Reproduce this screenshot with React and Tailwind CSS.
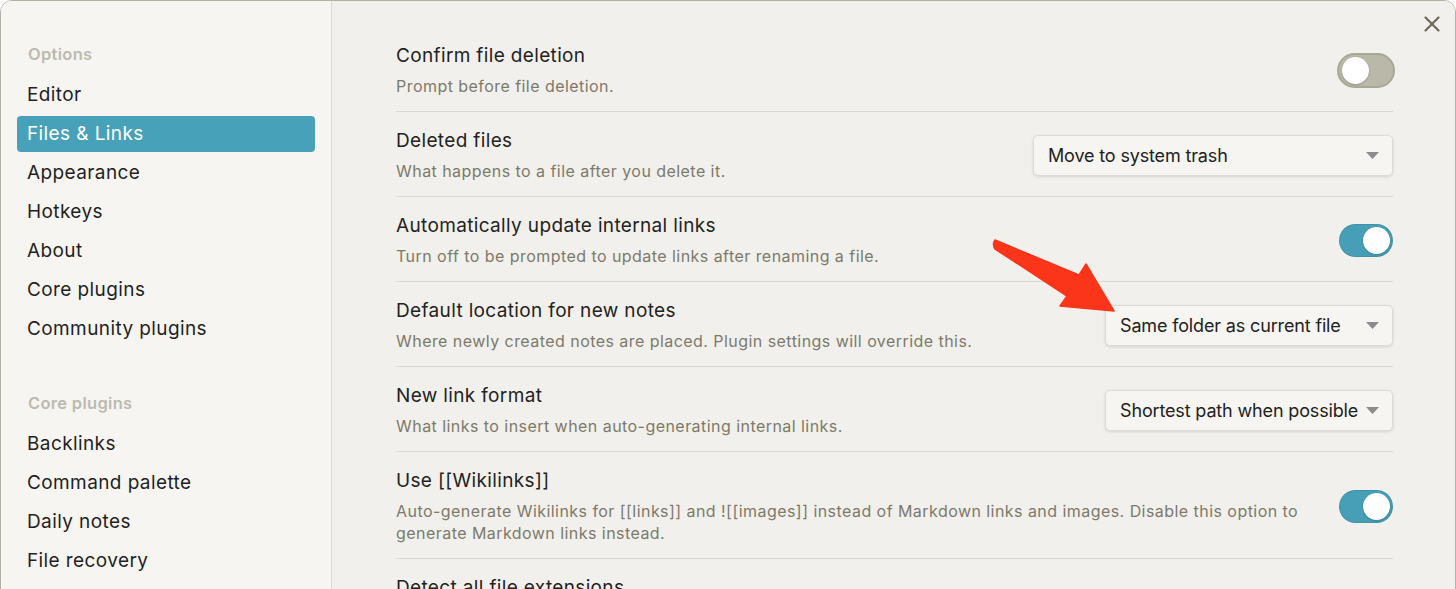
import React from "react";
import { X } from "lucide-react";

const optionItems = ["Editor", "Files & Links", "Appearance", "Hotkeys", "About", "Core plugins", "Community plugins"];
const coreItems = ["Backlinks", "Command palette", "Daily notes", "File recovery"];

const rows = [
  { title: "Confirm file deletion", desc: "Prompt before file deletion.", control: { type: "toggle", on: false } },
  { title: "Deleted files", desc: "What happens to a file after you delete it.", control: { type: "select", value: "Move to system trash", width: "w-[360px]" } },
  { title: "Automatically update internal links", desc: "Turn off to be prompted to update links after renaming a file.", control: { type: "toggle", on: true } },
  { title: "Default location for new notes", desc: "Where newly created notes are placed. Plugin settings will override this.", control: { type: "select", value: "Same folder as current file", width: "w-[288px]" } },
  { title: "New link format", desc: "What links to insert when auto-generating internal links.", control: { type: "select", value: "Shortest path when possible", width: "w-[288px]" } },
  {
    title: "Use [[Wikilinks]]",
    desc: "Auto-generate Wikilinks for [[links]] and ![[images]] instead of Markdown links and images. Disable this option to generate Markdown links instead.",
    control: { type: "toggle", on: true },
  },
  { title: "Detect all file extensions", desc: "", control: null },
];

const Toggle = ({ on }) => (
  <div
    className={
      on
        ? "w-[54px] h-[33px] rounded-full bg-[#469fb6] flex items-center justify-end px-[3px] shadow-[inset_0_0_0_1px_rgba(0,0,0,0.08)]"
        : "w-[58px] h-[35px] -mr-[2px] rounded-full bg-[#bab8a9] border-2 border-[#a9a796] flex items-center justify-start px-[3px]"
    }
  >
    <div className="w-[27px] h-[27px] rounded-full bg-white shadow-[0_1px_2px_rgba(0,0,0,0.2)]" />
  </div>
);

const Select = ({ value, width }) => (
  <div
    className={`${width} h-[41px] rounded-[5px] bg-[#f6f5f2] border border-[#dedbd5] shadow-[0_1px_3px_rgba(0,0,0,0.12)] flex items-center justify-between pl-[14px] pr-[13px]`}
  >
    <span className="text-[18px] tracking-[-0.15px] text-[#222222]">{value}</span>
    <svg width="13" height="8" viewBox="0 0 13 8">
      <path d="M0 0 L13 0 L6.5 7 Z" fill="#8c8c8c" />
    </svg>
  </div>
);

const SidebarItem = ({ label, active }) => (
  <div
    className={
      active
        ? "h-[36px] flex items-center px-[10px] rounded-[4px] bg-[#47a2b9] text-white text-[19px] tracking-[0.4px]"
        : "h-[36px] flex items-center px-[10px] text-[#1f1f1f] text-[19px] tracking-[0.4px]"
    }
  >
    {label}
  </div>
);

const App = () => {
  return (
    <div
      className="w-[1456px] h-[589px] overflow-hidden bg-white relative"
      style={{ fontFamily: "Inter, 'Noto Sans', sans-serif" }}
    >
      <div className="flex h-[620px] border border-[#b4b2a6] rounded-t-[12px] overflow-hidden">
        {/* Sidebar */}
        <div className="w-[331px] shrink-0 bg-[#f6f5f2] border-r border-[#dcd9d2] pt-[39px] px-[16px]">
          <div className="h-[28px] flex items-center px-[11px] text-[16.5px] tracking-[0.3px] font-semibold text-[#bdbab0] mb-[9px]">Options</div>
          <div className="flex flex-col gap-[3px]">
            {optionItems.map((item) => (
              <SidebarItem key={item} label={item} active={item === "Files & Links"} />
            ))}
          </div>
          <div className="h-[28px] flex items-center px-[11px] text-[16.5px] tracking-[0.3px] font-semibold text-[#bdbab0] mt-[42px] mb-[9px]">Core plugins</div>
          <div className="flex flex-col gap-[3px]">
            {coreItems.map((item) => (
              <SidebarItem key={item} label={item} />
            ))}
          </div>
        </div>

        {/* Main */}
        <div className="flex-1 bg-[#f2f0ec] relative pt-[26px] pl-[64px] pr-[62px]">
          <button className="absolute top-[10px] right-[10px] text-[#6e6b5c]">
            <X size={26} strokeWidth={2.1} />
          </button>

          {rows.map((row, i) => (
            <div
              key={row.title}
              className={`flex items-center ${i > 0 ? "border-t border-[#dcd9d2]" : ""} pt-[17px] pb-[14px]`}
            >
              <div className="flex-1 pr-[30px]">
                <div className="text-[19px] tracking-[0.35px] leading-[24px] text-[#222222]">{row.title}</div>
                {row.desc && (
                  <div className="text-[16px] tracking-[0.45px] leading-[22px] text-[#7c7a6b] mt-[7px]">{row.desc}</div>
                )}
              </div>
              {row.control && (
                <div className="shrink-0 flex justify-end">
                  {row.control.type === "toggle" ? (
                    <Toggle on={row.control.on} />
                  ) : (
                    <Select value={row.control.value} width={row.control.width} />
                  )}
                </div>
              )}
            </div>
          ))}
        </div>
      </div>

      {/* Annotation arrow */}
      <svg className="absolute left-0 top-0 pointer-events-none" width="1456" height="589">
        <path
          d="M995 240 L1079 275 L1086 264 L1114 311 L1060 306 L1067 296 L995 249 Q992 244 995 240 Z"
          fill="#fb3519"
          stroke="#fb3519"
          strokeWidth="1.5"
          strokeLinejoin="round"
        />
      </svg>
    </div>
  );
};

export default App;
